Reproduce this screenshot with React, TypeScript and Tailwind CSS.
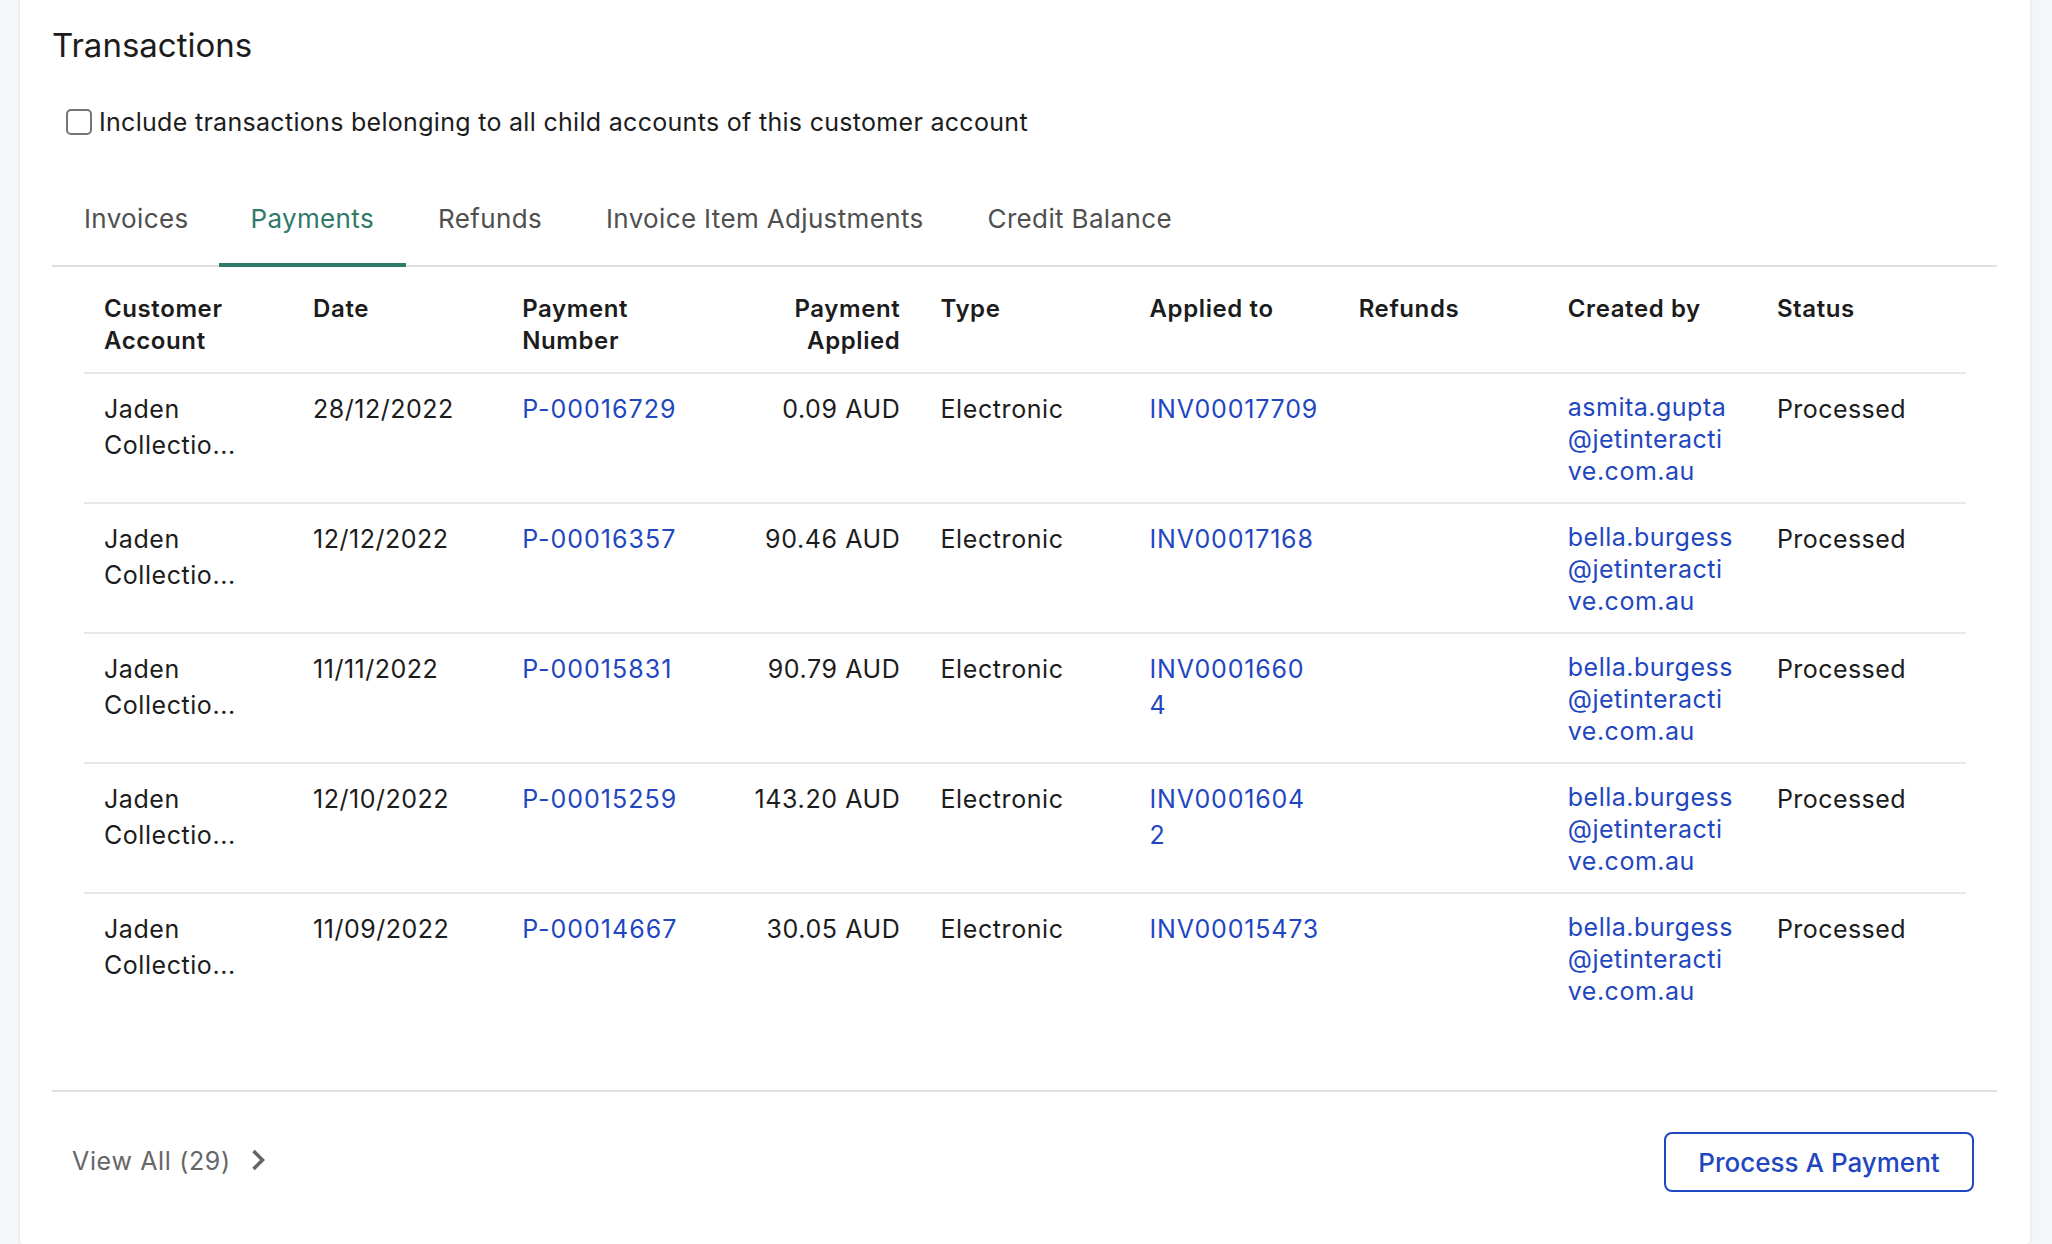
import React from "react";

const rows = [
  { date: "28/12/2022", pay: "P-00016729", amt: "0.09 AUD", inv: ["INV00017709"], by: ["asmita.gupta", "@jetinteracti", "ve.com.au"] },
  { date: "12/12/2022", pay: "P-00016357", amt: "90.46 AUD", inv: ["INV00017168"], by: ["bella.burgess", "@jetinteracti", "ve.com.au"] },
  { date: "11/11/2022", pay: "P-00015831", amt: "90.79 AUD", inv: ["INV0001660", "4"], by: ["bella.burgess", "@jetinteracti", "ve.com.au"] },
  { date: "12/10/2022", pay: "P-00015259", amt: "143.20 AUD", inv: ["INV0001604", "2"], by: ["bella.burgess", "@jetinteracti", "ve.com.au"] },
  { date: "11/09/2022", pay: "P-00014667", amt: "30.05 AUD", inv: ["INV00015473"], by: ["bella.burgess", "@jetinteracti", "ve.com.au"] },
];

const tabs = ["Invoices", "Payments", "Refunds", "Invoice Item Adjustments", "Credit Balance"];
const heads: [string, string?][] = [
  ["Customer", "Account"], ["Date"], ["Payment", "Number"], ["Payment", "Applied"], ["Type"], ["Applied to"], ["Refunds"], ["Created by"], ["Status"],
];

export default function App() {
  return (
    <div className="h-[1244px] bg-[#f5f6f8] px-[20px] overflow-hidden font-['Inter',sans-serif] tracking-[0.3px] text-[#1c1c1c]">
      <div className="h-full w-[2010px] bg-white rounded-b-[4px] shadow-[0_0_3px_rgba(0,0,0,0.12)] pl-[32px] pr-[33px] flex flex-col">
        <h2 className="text-[33px] leading-[40px] mt-[25px] font-normal tracking-normal">Transactions</h2>
        <label className="flex items-center mt-[41px] ml-[14px] h-[34px] text-[25px]">
          <span className="w-[26px] h-[26px] -mt-[3px] rounded-[5px] border-2 border-[#757575] mr-[7px] bg-white" />
          Include transactions belonging to all child accounts of this customer account
        </label>
        <div className="flex mt-[51px] h-[76px] border-b-2 border-[#e0e0e0]">
          {tabs.map((t) => (
            <div
              key={t}
              className={
                t === "Payments"
                  ? "px-[32px] pt-[10px] text-[26px] leading-[36px] tracking-[0.35px] text-[#2f7a68] border-b-4 border-[#2f7a68] -mb-[2px] -ml-[2px] h-[76px]"
                  : "px-[32px] pt-[10px] text-[26px] leading-[36px] tracking-[0.35px] text-[#4f4f4f]"
              }
            >
              {t}
            </div>
          ))}
        </div>
        <div className="px-[32px]">
          <table className="w-[1882px] table-fixed border-collapse text-[25px] tracking-[0.5px]">
            <thead>
              <tr className="border-b-2 border-[#e8e8e8] h-[106px]">
                {heads.map((h, i) => (
                  <th key={i} className={`align-top pt-[26px] px-[20px] text-[24px] tracking-[0.6px] font-semibold leading-[32px] ${i === 3 ? "text-right" : "text-left"}`}>
                    {h[0]}
                    {h[1] && <br />}
                    {h[1]}
                  </th>
                ))}
              </tr>
            </thead>
            <tbody>
              {rows.map((r, i) => (
                <tr key={r.pay} className={`h-[130px] align-top ${i < 4 ? "border-b-2 border-[#e8e8e8]" : ""}`}>
                  <td className="px-[20px] pt-[17px] leading-[36px] tracking-[0.55px]">Jaden<br />Collectio...</td>
                  <td className="px-[20px] pt-[17px] leading-[36px] tracking-[0.5px]">{r.date}</td>
                  <td className="px-[20px] pt-[17px] leading-[36px] tracking-[1px] text-[#1f47bf]">{r.pay}</td>
                  <td className="px-[20px] pt-[17px] leading-[36px] tracking-[0.6px] text-right">{r.amt}</td>
                  <td className="px-[20px] pt-[17px] leading-[36px] tracking-[0.6px]">Electronic</td>
                  <td className="px-[20px] pt-[17px] leading-[36px] tracking-[0.8px] text-[#1f47bf]">
                    {r.inv[0]}
                    {r.inv[1] && <br />}
                    {r.inv[1]}
                  </td>
                  <td className="px-[20px]" />
                  <td className="px-[20px] pt-[17px] leading-[32px] text-[#1f47bf]">
                    {r.by[0]}<br />{r.by[1]}<br />{r.by[2]}
                  </td>
                  <td className="px-[20px] pt-[17px] leading-[36px] tracking-[0.45px]">Processed</td>
                </tr>
              ))}
            </tbody>
          </table>
        </div>
        <div className="mt-[67px] border-t-2 border-[#e0e0e0] flex items-center justify-between pt-[40px] pl-[20px] pr-[23px]">
          <div className="flex items-center text-[#666] text-[25px] tracking-[0.65px]">
            View All (29)
            <svg className="ml-[20px] -mt-[4px]" width="14" height="22" viewBox="0 0 14 22" fill="none">
              <path d="M2.5 2l9 9-9 9" stroke="#666" strokeWidth="3.6" />
            </svg>
          </div>
          <button className="w-[310px] h-[60px] rounded-[8px] border-2 border-[#1f47bf] text-[#1f47bf] text-[26px] tracking-normal font-medium">
            Process A Payment
          </button>
        </div>
      </div>
    </div>
  );
}
